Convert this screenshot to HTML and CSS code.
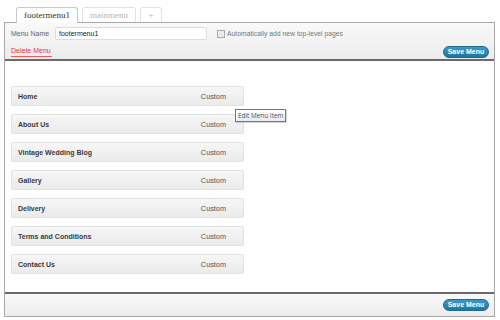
FILE: index.html
```html
<!DOCTYPE html>
<html lang="en">
<head>
<meta charset="UTF-8">
<title>Menus</title>
<link rel="stylesheet" href="styles.css">
</head>
<body>
<div class="tabs">
  <div class="tab active">footermenu1</div>
  <div class="tab main">mainmenu</div>
  <div class="tab plus">+</div>
</div>

<div class="frame">
  <!-- menu settings -->
  <div class="menu-header">
    <div class="name-row">
      <label class="name-label" for="menuName">Menu Name</label>
      <input class="name-input" id="menuName" type="text" value="footermenu1">
      <span class="auto-add"><span class="check"></span>Automatically add new top-level pages</span>
    </div>
    <div class="action-row">
      <a class="delete-link" href="#">Delete Menu</a>
      <button class="save-btn">Save Menu</button>
    </div>
  </div>

  <!-- menu items -->
  <div class="menu-body">
    <ul class="items">
      <li class="item"><span class="item-title">Home</span><span class="item-type">Custom</span></li>
      <li class="item"><span class="item-title">About Us</span><span class="item-type">Custom</span></li>
      <li class="item"><span class="item-title">Vintage Wedding Blog</span><span class="item-type">Custom</span></li>
      <li class="item"><span class="item-title">Gallery</span><span class="item-type">Custom</span></li>
      <li class="item"><span class="item-title">Delivery</span><span class="item-type">Custom</span></li>
      <li class="item"><span class="item-title">Terms and Conditions</span><span class="item-type">Custom</span></li>
      <li class="item"><span class="item-title">Contact Us</span><span class="item-type">Custom</span></li>
    </ul>
    <div class="tooltip">Edit Menu Item</div>
  </div>

  <div class="menu-footer">
    <button class="save-btn">Save Menu</button>
  </div>
</div>
</body>
</html>
```

FILE: styles.css
```css
body {
  margin: 0;
  background: #fff;
  font-family: 'Liberation Sans', Arial, sans-serif;
  font-size: 7px;
  color: #333;
}
.tabs {
  display: flex;
  gap: 4px;
  padding: 7px 0 0 16px;
  height: 15px;
}
.tab {
  box-sizing: border-box;
  height: 15px;
  border: 1px solid #e2e2e2;
  border-bottom: none;
  border-radius: 3px 3px 0 0;
  font-family: 'Liberation Serif', 'DejaVu Serif', serif;
  font-size: 9px;
  line-height: 14px;
  text-align: center;
  color: #b5b5b5;
  background: #fff;
}
.tab.active {
  width: 62px;
  border-color: #c8c8c8;
  color: #333;
  height: 16px;
  margin-bottom: -1px;
  position: relative;
}
.tab.main {
  width: 54px;
}
.tab.plus {
  width: 22px;
}
.frame {
  margin: 0 4px 0 4px;
  border: 1px solid #a8a8a8;
  width: 489px;
}
.menu-header {
  height: 36px;
  background: linear-gradient(#f9f9f9, #ececec);
  border-bottom: 2px solid #6a6a6a;
  padding: 0 5px 0 6px;
}
.name-row {
  display: flex;
  align-items: center;
  height: 17px;
  padding-top: 2px;
}
.name-label {
  color: #666;
  width: 44px;
}
.name-input {
  box-sizing: border-box;
  width: 152px;
  height: 13px;
  margin: 0;
  padding: 0 3px;
  border: 1px solid #ddd;
  border-radius: 2px;
  background: #fff;
  font-family: 'Liberation Sans', Arial, sans-serif;
  font-size: 7px;
  color: #222;
}
.auto-add {
  display: flex;
  align-items: center;
  margin-left: 10px;
  color: #777;
  font-size: 6.8px;
}
.check {
  box-sizing: border-box;
  width: 8px;
  height: 8px;
  margin-right: 2px;
  border: 1px solid #aaa;
  background: #eaeaea;
}
.action-row {
  display: flex;
  justify-content: space-between;
  align-items: center;
  height: 15px;
  margin-top: 2px;
}
.delete-link {
  color: #e8333b;
  text-decoration: none;
  border-bottom: 1px solid #ef5a60;
  padding: 0 1px 1px 0;
  line-height: 8px;
}
.save-btn {
  box-sizing: border-box;
  width: 46px;
  height: 12px;
  padding: 0;
  border: 1px solid #1e6b91;
  border-radius: 7px;
  background: linear-gradient(#3d98c9, #21759b);
  color: #fff;
  font-family: 'Liberation Sans', Arial, sans-serif;
  font-size: 7px;
  font-weight: bold;
  line-height: 10px;
}
.menu-body {
  position: relative;
  height: 231px;
  padding: 25px 0 0 6px;
  box-sizing: border-box;
  background: #fff;
}
.items {
  list-style: none;
  margin: 0;
  padding: 0;
  display: flex;
  flex-direction: column;
  gap: 8px;
}
.item {
  box-sizing: border-box;
  display: flex;
  justify-content: space-between;
  align-items: center;
  width: 233px;
  height: 20px;
  padding: 0 17px 0 6px;
  border: 1px solid #e2e2e2;
  border-radius: 2px;
  background: linear-gradient(#f6f6f6, #ebebeb);
}
.item-title {
  font-weight: bold;
  color: #3a3a3a;
}
.item-type {
  color: #555;
  font-size: 7.3px;
}
.tooltip {
  position: absolute;
  left: 230px;
  top: 48px;
  padding: 1px 2px;
  border: 1px solid #767676;
  background: linear-gradient(#fff, #e6ecf5);
  color: #4c4c4c;
  font-family: 'Open Sans', sans-serif;
  font-size: 6.4px;
  line-height: 9px;
  box-shadow: 1px 1px 1px rgba(0,0,0,0.15);
}
.menu-footer {
  display: flex;
  justify-content: flex-end;
  align-items: center;
  height: 22px;
  padding: 0 5px;
  border-top: 2px solid #6a6a6a;
  background: linear-gradient(#f9f9f9, #ececec);
}
```
